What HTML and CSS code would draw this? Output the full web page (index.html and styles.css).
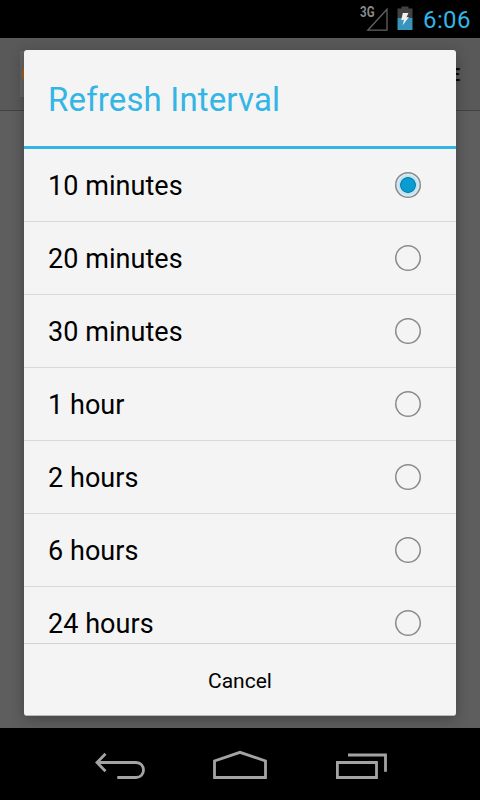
FILE: index.html
```html
<!DOCTYPE html>
<html lang="en">
<head>
<meta charset="utf-8">
<title>Refresh Interval</title>
<link rel="stylesheet" href="styles.css">
</head>
<body>
<div class="screen">
  <header class="status">
    <svg width="30" height="38" viewBox="0 0 30 38">
      <text class="network" x="0" y="17" textLength="14.5" lengthAdjust="spacingAndGlyphs">3G</text>
      <path d="M7.8 30.2 27 9.2V30.2Z" fill="none" stroke="#626262" stroke-width="1.3"/>
    </svg>
    <svg class="battery" width="16" height="38" viewBox="0 0 16 38">
      <path d="M4.5 6.5h7v2H15.500v9.500H.5V8.500h4z" fill="#424242"/>
      <path d="M.5 18h15v12H.5z" fill="#3794bb"/>
      <path d="M5.800 13H11.500L9.500 17.300 12 17 5.500 25.500 7 19.800 4.200 20.200Z" fill="#f0f0f0"/>
    </svg>
    <time class="clock">6:06</time>
  </header>
  <main class="content">
    <div class="appbar">
      <div class="logo"><span class="logo-mark"></span></div>
      <span class="action">E</span>
    </div>
    <section class="dialog">
      <h1 class="title">Refresh Interval</h1>
      <ul class="options">
        <li class="option"><span>10 minutes</span><i class="radio checked"></i></li>
        <li class="option"><span>20 minutes</span><i class="radio"></i></li>
        <li class="option"><span>30 minutes</span><i class="radio"></i></li>
        <li class="option"><span>1 hour</span><i class="radio"></i></li>
        <li class="option"><span>2 hours</span><i class="radio"></i></li>
        <li class="option"><span>6 hours</span><i class="radio"></i></li>
        <li class="option"><span>24 hours</span><i class="radio"></i></li>
      </ul>
      <button class="cancel">Cancel</button>
    </section>
  </main>
  <nav class="nav">
    <svg width="480" height="72" viewBox="0 0 480 72" fill="none" stroke="#a3a3a3" stroke-width="2.800">
      <path d="M97 34.500H136C146 34.500 146 49.500 136 49.500H117.300M105.500 25.800 97 34.500 105.500 43.200"/>
      <path d="M214.500 49.500V33L240 24.300 265.500 33V49.500Z"/>
      <path d="M337.400 34.500H376.500V49.500H337.400ZM348 27H385.500V43.700"/>
    </svg>
  </nav>
</div>
</body>
</html>
```
FILE: styles.css
```css
* {
  box-sizing: border-box;
}

body {
  margin: 0;
  background: #000;
  font-family: Roboto, "Liberation Sans", sans-serif;
}

.screen {
  display: flex;
  flex-direction: column;
  width: 480px;
  height: 800px;
  overflow: hidden;
}

.status {
  display: flex;
  justify-content: flex-end;
  height: 38px;
  padding-right: 9px;
  background: #000;
}

.network {
  fill: #8a8a8a;
  font-size: 14px;
  font-weight: 700;
}

.battery {
  margin: 0 10px 0 7px;
}

.clock {
  color: #33b5e5;
  width: 48px;
  font-size: 24px;
  line-height: 40px;
  letter-spacing: 0.4px;
}

.content {
  position: relative;
  height: 690px;
  background: #5e5e5e;
}

.appbar {
  display: flex;
  justify-content: space-between;
  height: 73px;
  padding: 13px 20px 0;
  background: #595959;
  border-bottom: 1px solid #434343;
}

.logo {
  width: 46px;
  height: 46px;
  padding: 15px 2px;
  background: #666;
}

.logo-mark {
  display: block;
  width: 16px;
  height: 16px;
  border-radius: 6px;
  background: #a3661c;
}

.action {
  color: #080808;
  font-size: 18px;
  font-weight: 700;
  line-height: 48px;
}

.dialog {
  position: absolute;
  top: 12px;
  left: 24px;
  display: flex;
  flex-direction: column;
  width: 432px;
  height: 666px;
  overflow: hidden;
  border-radius: 3px;
  border-bottom: 1px solid #b9b9b9;
  background: #f4f4f4;
  box-shadow: 0 3px 14px rgba(0, 0, 0, 0.3);
}

.title {
  flex: none;
  height: 99px;
  margin: 0;
  padding-left: 24px;
  border-bottom: 3px solid #33b5e5;
  color: #33b5e5;
  font-size: 33px;
  font-weight: 400;
  line-height: 100px;
  letter-spacing: 0.15px;
}

.options {
  height: 494px;
  margin: 0;
  padding: 0;
  overflow: hidden;
  list-style: none;
}

.option {
  display: flex;
  align-items: center;
  justify-content: space-between;
  height: 73px;
  padding: 0 35px 0 24px;
  border-bottom: 1px solid #d9d9d9;
  color: #000;
  font-size: 27px;
  line-height: 34px;
  letter-spacing: 0.05px;
}

.option span {
  padding-top: 2px;
}

.radio {
  width: 26px;
  height: 26px;
  border-radius: 50%;
  box-shadow: inset 0 0 0 1.5px #8a8a8a;
}

.checked {
  background: radial-gradient(circle, #0a9bd0 0 6.500px, #087fac 7px 7.500px, #b5dff0 8.200px, #e4f1f7 12px);
}

.cancel {
  flex: none;
  height: 72px;
  padding: 2px 0 0;
  border: 0;
  border-top: 1px solid #d3d3d3;
  background: transparent;
  color: #000;
  font: 400 21px Roboto, "Liberation Sans", sans-serif;
}

.nav {
  height: 72px;
  background: #000;
}
```
